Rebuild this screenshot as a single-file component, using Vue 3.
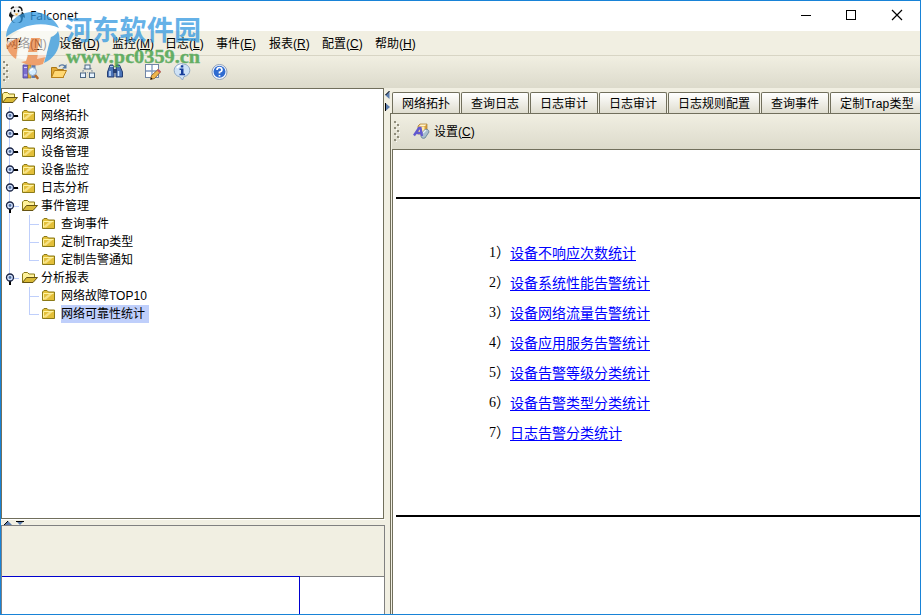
<script setup>
const menus = [
  ['网络', 'N', 53], ['设备', 'D', 53], ['监控', 'M', 53], ['日志', 'L', 51],
  ['事件', 'E', 53], ['报表', 'R', 53], ['配置', 'C', 53], ['帮助', 'H', 53],
]
const tabs = [
  ['网络拓扑', 68], ['查询日志', 68], ['日志审计', 68], ['日志审计', 68],
  ['日志规则配置', 92], ['查询事件', 68], ['定制Trap类型', 94],
]
const tree = [
  { text: 'Falconet', depth: 0, open: true },
  { text: '网络拓扑', depth: 1 },
  { text: '网络资源', depth: 1 },
  { text: '设备管理', depth: 1 },
  { text: '设备监控', depth: 1 },
  { text: '日志分析', depth: 1 },
  { text: '事件管理', depth: 1, open: true },
  { text: '查询事件', depth: 2, rail: true },
  { text: '定制Trap类型', depth: 2, rail: true },
  { text: '定制告警通知', depth: 2, rail: true, last: true },
  { text: '分析报表', depth: 1, open: true, last: true },
  { text: '网络故障TOP10', depth: 2 },
  { text: '网络可靠性统计', depth: 2, last: true, selected: true },
]
const reports = [
  '设备不响应次数统计', '设备系统性能告警统计', '设备网络流量告警统计', '设备应用服务告警统计',
  '设备告警等级分类统计', '设备告警类型分类统计', '日志告警分类统计',
]
</script>

<template>
  <div class="window">
    <header class="title">
      <svg class="penguin" width="18" height="18" viewBox="0 0 18 18">
        <path d="M1 10Q1 6 4 5L13 5Q17 7 17 12L15 11Q15 16 12 17H6Q3 16 3 12Z" fill="#171717" />
        <ellipse cx="8.500" cy="13" rx="4.500" ry="4" fill="#fff" />
        <ellipse cx="8.500" cy="5.500" rx="5.500" ry="4.500" fill="#f3f3f3" stroke="#b0b0b0" stroke-width=".6" />
        <path d="M3 3Q4 1 6 1M10.500 1Q14 1 14 5" fill="none" stroke="#111" stroke-width="1.300" />
        <ellipse cx="6.500" cy="5" rx=".8" ry="1.300" /><ellipse cx="10.500" cy="5" rx=".8" ry="1.300" />
        <path d="M6.500 7.500H10.500L8.500 9.500Z" fill="#f3ad32" />
      </svg>
      <span class="name">Falconet</span>
      <div class="controls">
        <svg width="102" height="12" viewBox="0 0 102 12" fill="none" stroke="#000" shape-rendering="crispEdges">
          <path d="M0 6.500H10" />
          <rect x="45.500" y="1.500" width="9" height="9" />
          <path d="M91 1L101 11M101 1L91 11" shape-rendering="auto" stroke-width="1.200" />
        </svg>
      </div>
    </header>

    <nav class="menu">
      <span v-for="m in menus" :key="m[1]" :style="{ width: m[2] + 'px' }">{{ m[0] }}(<u>{{ m[1] }}</u>)</span>
    </nav>

    <div class="toolbar">
      <svg class="grip" width="8" height="24" viewBox="0 0 8 24" shape-rendering="crispEdges">
        <g fill="#fff"><path d="M3 3h1v1h-1zM3 9h1v1h-1zM3 15h1v1h-1zM3 21h1v1h-1zM6 6h1v1h-1zM6 12h1v1h-1zM6 18h1v1h-1z" /></g>
        <g fill="#716f5c"><path d="M1 1h2v2h-2zM1 7h2v2h-2zM1 13h2v2h-2zM1 19h2v2h-2zM4 4h2v2h-2zM4 10h2v2h-2zM4 16h2v2h-2z" opacity=".75" /></g>
      </svg>
      <svg class="tool t1" width="18" height="18" viewBox="0 0 18 18">
        <path d="M1 2h5v13h-5z" fill="#7b6ed0" stroke="#4d4199" stroke-width=".8" />
        <path d="M2 4.500h3M2 12h3" stroke="#d5cfff" />
        <path d="M6 2h3v13h-3z" fill="#e5b43c" stroke="#9a741b" stroke-width=".6" />
        <path d="M9.500 2h4v13h-4z" fill="#5f7cb0" />
        <path d="M13 12l2.500 3" stroke="#b5692c" stroke-width="2.600" stroke-linecap="round" />
        <circle cx="10.500" cy="8.500" r="4" fill="#d7efff" stroke="#8fa6c4" />
        <path d="M8.500 8q.5-2 2.500-2" fill="none" stroke="#fff" stroke-width="1.300" />
      </svg>
      <svg class="tool t2" width="18" height="18" viewBox="0 0 18 18">
        <path d="M1.500 14.500V4.500h5l1 2h6v8z" fill="#e4ab35" stroke="#ab7816" />
        <path d="M1.500 14.500l3-7h12l-3.500 7z" fill="#ffd873" stroke="#b98018" />
        <path d="M9 3.500q2.500-3 6-.5" fill="none" stroke="#5578a5" stroke-width="1.400" /><path d="M16.500 1v4.500H12z" fill="#5578a5" />
      </svg>
      <svg class="tool t3" width="18" height="18" viewBox="0 0 18 18" fill="#e8f4ff" stroke="#4c6784">
        <path d="M5.500 5L3.500 9M11.500 5L13.500 9" fill="none" stroke="#6d7f95" stroke-width="1.200" stroke-dasharray="1.500 1" />
        <rect x="6" y="2" width="5" height="4" />
        <path d="M6 9.500h5" stroke="#9caab8" stroke-dasharray="1 1" />
        <rect x="1.500" y="10" width="5" height="4.500" /><rect x="10.500" y="10" width="5" height="4.500" />
      </svg>
      <svg class="tool t4" width="18" height="18" viewBox="0 0 18 18">
        <path d="M4 2h3l.5 4 .5 2v6H1.500V9zM10.500 2h3l3 7v5H10V8z" fill="#4a73b7" stroke="#263f72" />
        <path d="M7 6h4v4H7z" fill="#263f72" /><path d="M4 8v5M12.500 8v5" stroke="#c8e1ff" stroke-width="1.500" />
        <path d="M4 3.500h3M10.500 3.500h3" stroke="#a9c8f4" />
      </svg>
      <svg class="tool t5" width="18" height="18" viewBox="0 0 18 18">
        <rect x="1.500" y="1.500" width="13" height="13" fill="#fff" stroke="#7085a5" />
        <path d="M8 2v12.500M2 8h12.500" stroke="#7f98bd" stroke-width="1.300" />
        <path d="M6.500 16.500l1-4 6.500-6 2.500 2.500-6 6.500z" fill="#efb64c" stroke="#7c5223" stroke-width=".8" />
        <path d="M13 7.500l1.500-1.500 2.500 2.500-1.500 1.500z" fill="#c45b64" /><path d="M6.500 16.500l.6-2 1.500 1.500z" />
      </svg>
      <svg class="tool t6" width="18" height="18" viewBox="0 0 18 18">
        <path d="M9 .8C4.500.8 1.200 3.500 1.200 7.500c0 3.200 2 5.500 5.300 6.200L9.500 17l1.500-3.400c3.500-.6 5.800-3 5.800-6.200C16.800 3.500 13.500.8 9 .8z" fill="#cfe2f6" stroke="#8fa8c3" />
        <path d="M4 5q2-3 5-3" fill="none" stroke="#fff" stroke-width="1.500" />
        <path d="M7.800 2.200h2.500v2.200H7.800zM6.500 5.500h4v5.300H12v1.500H6.500v-1.500H8V7H6.500z" fill="#183f9b" />
      </svg>
      <svg class="tool t7" width="18" height="18" viewBox="0 0 18 18">
        <circle cx="8.500" cy="9" r="7.500" fill="#f8fbff" stroke="#8d9eb7" />
        <circle cx="8.500" cy="8.700" r="6" fill="#2f6bd0" />
        <path d="M6 7q0-2.500 2.500-2.500T11 7Q11 8.200 8.500 9.200V10.500M8.500 12v1.500" fill="none" stroke="#fff" stroke-width="1.700" />
      </svg>
    </div>

    <main>
      <section class="left">
        <div class="tree">
          <div v-for="row in tree" :key="row.text" class="row">
            <svg v-if="row.depth === 1" class="cell" width="20" height="18" viewBox="0 0 20 18">
              <path :d="row.last ? 'M7.500 0V9' : 'M7.500 0V18'" stroke="#bfcffb" />
              <path d="M8 9.500H17" stroke="#bfcffb" />
              <path v-if="row.open" d="M8 11V16" stroke="#000" stroke-width="2" />
              <path v-else d="M10 9H16" stroke="#000" stroke-width="2" />
              <circle cx="8" cy="8.500" r="3.500" fill="#d4e2ff" stroke="#182344" stroke-width="1.300" />
              <circle cx="8" cy="8.500" r="1.400" fill="#52709d" />
            </svg>
            <template v-if="row.depth === 2">
              <svg class="cell" width="20" height="18" viewBox="0 0 20 18"><path v-if="row.rail" d="M7.500 0V18" stroke="#bfcffb" /></svg>
              <svg class="cell" width="20" height="18" viewBox="0 0 20 18" fill="none" stroke="#bfcffb">
                <path :d="row.last ? 'M7.500 0V9' : 'M7.500 0V18'" /><path d="M7 9.500H17" />
              </svg>
            </template>
            <svg class="folder" width="19" height="18" viewBox="0 0 19 18">
              <template v-if="row.open">
                <path d="M.5 13.500V5l1.500-1.500h3.500L7 5h5.500v3.500" fill="#fff29a" stroke="#8b7a18" />
                <path d="M.5 13.500L4.500 8.500H15.500l-4.500 5z" fill="#d8b936" stroke="#665412" />
              </template>
              <template v-else>
                <path d="M.5 13.500V5l1.500-1.500h3L6.500 5h6v8.500z" fill="#e3bf3a" stroke="#8b7a18" />
                <path d="M1.500 12.500V6.500h10" fill="none" stroke="#fff4a0" />
                <path d="M2 12.500V11L7 7h3.500L4 12.500z" fill="#f7e184" />
              </template>
            </svg>
            <span class="label" :class="{ selected: row.selected, latin: row.depth === 0 }">{{ row.text }}</span>
          </div>
        </div>
        <div class="hsplit">
          <svg width="24" height="4" viewBox="0 0 24 4">
            <path d="M2 4L6 0l4 4z" fill="#5b7cac" /><path d="M2 4L6 0" stroke="#000" />
            <path d="M14 0h8l-4 4z" fill="#5b7cac" /><path d="M14 .5h8" stroke="#000" />
          </svg>
        </div>
        <div class="overview">
          <div class="band"></div>
          <div class="canvas"><div class="viewport"></div></div>
        </div>
      </section>

      <div class="vsplit">
        <svg width="5" height="20" viewBox="0 0 5 20">
          <path d="M4.500 0v8L0 4z" fill="#5b7cac" /><path d="M4.500 0L.5 4" stroke="#000" />
          <path d="M.5 12v8L5 16z" fill="#5b7cac" /><path d="M.5 12v8" stroke="#000" />
        </svg>
      </div>

      <section class="right">
        <div class="tabs">
          <div v-for="(t, i) in tabs" :key="i" class="tab" :class="{ mixed: i === 6 }" :style="{ width: t[1] + 'px' }">{{ t[0] }}</div>
        </div>
        <div class="pane">
          <div class="settings">
            <svg class="grip" width="8" height="24" viewBox="0 0 8 24" shape-rendering="crispEdges">
              <g fill="#fff"><path d="M3 3h1v1h-1zM3 9h1v1h-1zM3 15h1v1h-1zM3 21h1v1h-1zM6 6h1v1h-1zM6 12h1v1h-1zM6 18h1v1h-1z" /></g>
              <g fill="#716f5c"><path d="M1 1h2v2h-2zM1 7h2v2h-2zM1 13h2v2h-2zM1 19h2v2h-2zM4 4h2v2h-2zM4 10h2v2h-2zM4 16h2v2h-2z" opacity=".75" /></g>
            </svg>
            <svg class="seticon" width="17" height="17" viewBox="0 0 17 17">
              <path d="M5 3l2-2h7v8l-2 2H5z" fill="#d99f3e" stroke="#a77b2b" stroke-width=".7" />
              <path d="M5.500 3.500h6v6h-6z" fill="#ffe9a8" /><path d="M6 3l1.500-1.500h6L12 3z" fill="#fff3cd" />
              <path d="M8 11l4-4.500q3.500-1 4 2.500l-4 6q-4.500 1.500-4-4z" fill="#a9c0cf" stroke="#5c7890" stroke-width=".8" />
              <path d="M10 10l3-3" stroke="#e6f1f8" stroke-width="1.500" />
              <path d="M1 12.500L6 5h1.500l1.500 8M3.500 10h5" fill="none" stroke="#6259cf" stroke-width="2.300" />
            </svg>
            <span>设置(<u>C</u>)</span>
          </div>
          <div class="page">
            <div class="report">
              <div v-for="(r, i) in reports" :key="r" class="item">
                <span class="num">{{ i + 1 }}）</span><a>{{ r }}</a>
              </div>
            </div>
          </div>
        </div>
      </section>
    </main>

    <svg class="watermark" width="205" height="72" viewBox="0 0 205 72">
      <g opacity=".75">
        <path d="M6 37C7 22 18 12 33 12C45 12 55 19 59 28C48 23 34 23 22 28C15 31 10 34 6 37ZM58 31C63 44 56 58 44 63L51 37Q56 35 58 31Z" fill="#3298df" />
        <path d="M6 44C10 41 14 39 19 38L16 59C10 55 7 50 6 44ZM31 38H40L37 52H28ZM28 55H46L43 64Q33 68 21 62L26 61Z" fill="#ef8747" />
      </g>
      <path d="M6 43C12 34 21 29 31 27C41 25 51 26 58 30C56 34 54 36 50 37L46 57L37 59L41 38H31L26 60L17 58L21 37Q12 39 7 46Z" fill="#fff" opacity=".6" />
      <text x="65" y="40" class="cn" textLength="136">河东软件园</text>
      <text x="66" y="63" class="url" textLength="134" lengthAdjust="spacingAndGlyphs">www.pc0359.cn</text>
    </svg>
  </div>
</template>

<style>
body { overflow: hidden; }
</style>

<style scoped>
* { box-sizing: border-box; }
.window { position: relative; width: 921px; height: 615px; border: 1px solid #1883d7; background: #f1efe2; display: flex; flex-direction: column; overflow: hidden; color: #000; font: 12px/16px "Liberation Sans", "Noto Sans CJK SC", sans-serif; }
svg { display: block; flex: none; }
.title { height: 30px; flex: none; background: #fff; display: flex; align-items: center; padding-left: 7px; }
.penguin { margin-right: 4px; margin-top: -2px; }
.name { font-family: "Open Sans", sans-serif; letter-spacing: .15px; }
.controls { margin-left: auto; padding-right: 17px; margin-top: -3px; }
.menu { height: 25px; flex: none; display: flex; align-items: center; padding: 1px 0 0 5px; border-bottom: 1px solid #d8d5c5; white-space: nowrap; }
.menu span { flex: none; }
u { text-underline-offset: 1px; text-decoration-thickness: 1px; }
.toolbar { height: 32px; flex: none; display: flex; align-items: center; background: linear-gradient(#f1efe2, #dcdacb); padding-left: 1px; }
.t1 { margin-left: 12px; }
.t2 { margin-left: 10px; }
.t3 { margin-left: 11px; }
.t4 { margin-left: 9px; }
.t5 { margin-left: 20px; }
.t6 { margin-left: 11px; }
.t7 { margin-left: 20px; }
.tool { margin-top: -1px; }
main { flex: 1; min-height: 0; display: flex; }
.left { width: 384px; flex: none; display: flex; flex-direction: column; }
.tree { width: 383px; height: 431px; flex: none; background: #fff; border: 1px solid #716f5c; padding-left: 0; }
.row { height: 18px; display: flex; align-items: center; }
.label { height: 18px; line-height: 19px; padding-right: 4px; white-space: nowrap; }
.latin { padding-left: 1px; line-height: 18px; letter-spacing: .25px; }
.selected { background: #bfcffb; }
.hsplit { height: 6px; flex: none; border-top: 1px solid #fff; padding: 1px 0 0 1px; }
.overview { flex: 1; border: 1px solid #808080; border-bottom: 0; display: flex; flex-direction: column; }
.band { height: 50px; flex: none; }
.canvas { flex: 1; background: #fff; border-top: 1px solid #808080; }
.viewport { width: 298px; height: 38px; margin-top: -1px; border-top: 1px solid #0000ce; border-right: 1px solid #0000ce; }
.vsplit { width: 5px; flex: none; padding-top: 3px; }
.right { flex: 1; min-width: 0; display: flex; flex-direction: column; padding-top: 4px; }
.tabs { height: 21px; flex: none; display: flex; gap: 1px; padding-left: 2px; overflow: hidden; }
.tab { flex: none; border: 1px solid #716f5c; border-bottom: 0; border-radius: 2px 2px 0 0; background: linear-gradient(#fff, #dfddcf); padding-left: 9px; line-height: 22px; white-space: nowrap; }
.mixed { letter-spacing: .2px; }
.pane { flex: 1; border-top: 1px solid #716f5c; border-left: 1px solid #716f5c; padding-left: 1px; display: flex; flex-direction: column; }
.settings { height: 35px; flex: none; display: flex; align-items: center; background: linear-gradient(#f1efe2, #dcdacb); padding-left: 1px; }
.seticon { margin: 0 4px 0 12px; }
.page { flex: 1; background: #fff; border-top: 1px solid #716f5c; border-left: 1px solid #716f5c; padding: 47px 0 0 3px; }
.report { height: 320px; border-top: 2px solid #000; border-bottom: 2px solid #000; padding: 39px 0 0 93px; }
.item { height: 30px; display: flex; align-items: center; font-size: 14px; line-height: 14px; white-space: nowrap; }
.num { width: 21px; font-family: "Liberation Serif", "Noto Sans CJK SC", serif; }
.item a { height: 15px; line-height: 14px; color: #00f; border-bottom: 1px solid #00f; }
.watermark { position: absolute; left: -1px; top: -1px; }
.cn { font: 700 27px "Noto Sans CJK SC", sans-serif; fill: #3298df; opacity: .75; }
.url { font: 700 19px "Liberation Serif", serif; fill: #43a047; stroke: #43a047; stroke-width: .4px; opacity: .8; }
</style>
